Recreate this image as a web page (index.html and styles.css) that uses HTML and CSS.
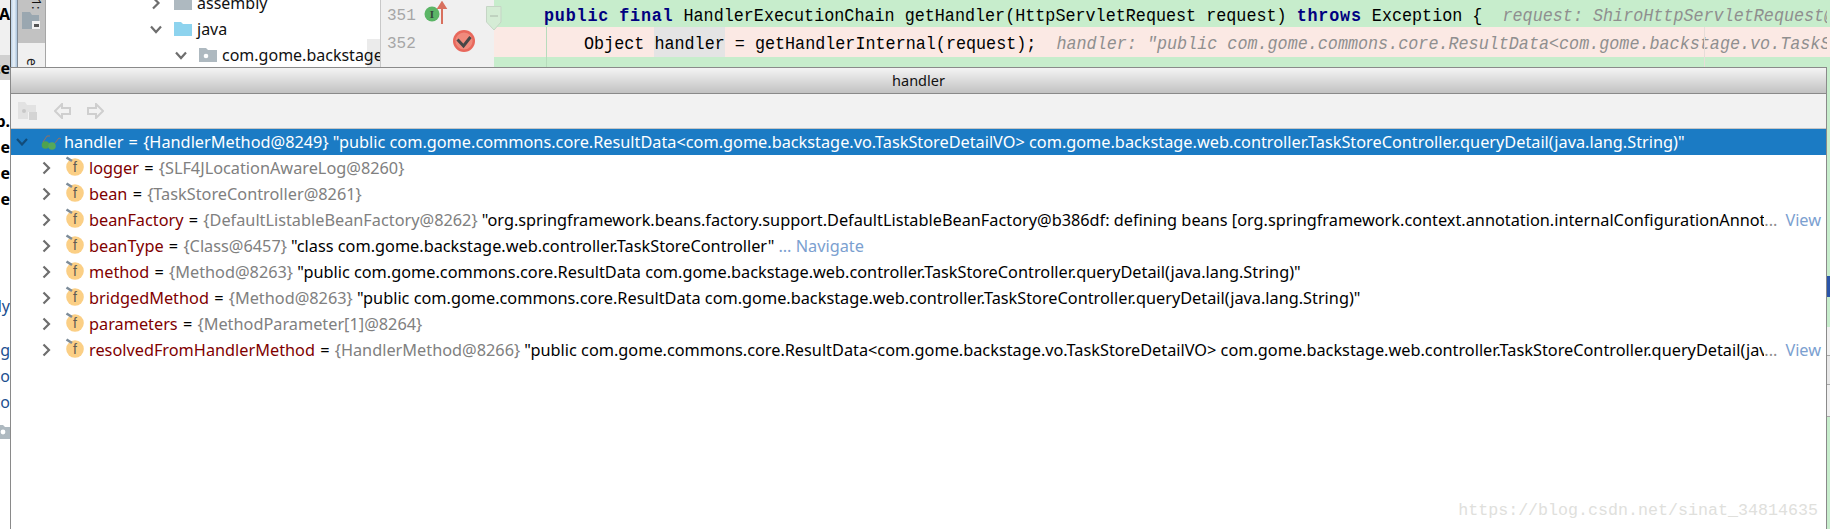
FILE: index.html
```html
<!DOCTYPE html>
<html lang="en">
<head>
<meta charset="utf-8">
<title>handler</title>
<link rel="stylesheet" href="styles.css">
</head>
<body>
<svg class="defs" width="0" height="0" aria-hidden="true">
  <defs>
    <g id="field">
      <circle cx="10" cy="11" r="8.8" fill="#fbcf85"/>
      <text x="10" y="16" text-anchor="middle" font-family="Liberation Sans, sans-serif" font-size="14" fill="#5f5c54">f</text>
      <path d="M1.5 1.5 L7 5" stroke="#7d8c99" stroke-width="2.6" fill="none"/>
    </g>
    <path id="chev" d="M1.5 1.5 L7 7 L1.5 12.5" stroke="#6e6e6e" stroke-width="2.2" fill="none"/>
  </defs>
</svg>
<div class="screen">
  <div class="clip">
    <div class="clip-row h27 grey"><b>TA</b></div>
    <div class="clip-row h28 grey"></div>
    <div class="clip-row h25 mid"><b>ute</b></div>
    <div class="clip-gap g28"></div>
    <div class="clip-row h26"><b>ab.</b></div>
    <div class="clip-row h26"><b>ne</b></div>
    <div class="clip-row h26"><b>ne</b></div>
    <div class="clip-row h26"><b>ne</b></div>
    <div class="clip-gap g81"></div>
    <div class="clip-row h26 link">ly</div>
    <div class="clip-gap g18"></div>
    <div class="clip-row h26 link">m.g</div>
    <div class="clip-row h26 link">co</div>
    <div class="clip-row h26 link">co</div>
    <div class="clip-folder">
      <svg width="10" height="16" viewBox="0 0 10 16"><path d="M-8 2 H3 L5 4 H10 V16 H-8 Z" fill="#aeb9c0"/><circle cx="3" cy="9" r="2.4" fill="#fff"/></svg>
    </div>
  </div>
  <div class="stripe"></div>
  <div class="sidebar">
    <div class="side-tab">
      <span class="side-num">1:</span>
      <svg class="side-icon" width="19" height="18" viewBox="0 0 19 18"><path d="M0 0 H8 L10 3 H17 V10 H10 V17 H0 Z" fill="#9aa7b0"/><rect x="10" y="9" width="8" height="8" fill="#f2f2f2"/><rect x="12" y="12" width="5" height="3" fill="#555"/></svg>
    </div>
    <div class="side-rest"><span class="side-letter">e</span></div>
  </div>
  <div class="tree">
    <div class="tree-scroll"></div>
    <div class="tree-row lvl0">
      <svg class="t-chev" width="9" height="14" viewBox="0 0 9 14"><use href="#chev"/></svg>
      <svg class="t-icon" width="18" height="14" viewBox="0 0 18 14"><path d="M0 0 H7 L9 2 H18 V14 H0 Z" fill="#aeb9c0"/></svg>
      <span>assembly</span>
    </div>
    <div class="tree-row lvl0">
      <svg class="t-chev" width="12" height="9" viewBox="0 0 12 9"><path d="M1 1.5 L6 7 L11 1.5" stroke="#6e6e6e" stroke-width="2.2" fill="none"/></svg>
      <svg class="t-icon" width="18" height="14" viewBox="0 0 18 14"><path d="M0 0 H7 L9 2 H18 V14 H0 Z" fill="#8dd3ee"/></svg>
      <span>java</span>
    </div>
    <div class="tree-row lvl1">
      <svg class="t-chev" width="12" height="9" viewBox="0 0 12 9"><path d="M1 1.5 L6 7 L11 1.5" stroke="#6e6e6e" stroke-width="2.2" fill="none"/></svg>
      <svg class="t-icon" width="18" height="14" viewBox="0 0 18 14"><path d="M0 0 H7 L9 2 H18 V14 H0 Z" fill="#aeb9c0"/><circle cx="7" cy="8" r="2.3" fill="#fff"/></svg>
      <span>com.gome.backstage.web.controller</span>
    </div>
  </div>
  <div class="gutter">
    <div class="gut-row g1">
      <span class="lnum">351</span>
      <svg class="gut-i" width="28" height="24" viewBox="0 0 28 24"><circle cx="8" cy="13" r="7.5" fill="#5bb566"/><text x="8" y="17" text-anchor="middle" font-family="Liberation Serif, serif" font-weight="700" font-size="11" fill="#33473a">I</text><path d="M18 23 V3 M14.5 7 L18 1.5 L21.5 7 Z" stroke="#d8705e" stroke-width="2" fill="#d8705e"/></svg>
    </div>
    <div class="gut-row g2">
      <span class="lnum">352</span>
      <svg class="gut-b" width="24" height="24" viewBox="0 0 24 24"><circle cx="12" cy="12" r="11" fill="#e8685c"/><circle cx="12" cy="12" r="8.6" fill="#f08a7c"/><path d="M5.5 10.5 L11.5 17 L18.5 8" stroke="#474747" stroke-width="3" fill="none"/></svg>
    </div>
    <svg class="fold" width="16" height="25" viewBox="0 0 16 25"><path d="M.5 .5 H15 V16 L8 24 L.5 16 Z" fill="#d5ecd5" stroke="#c5d5c5"/><path d="M4 10 H12" stroke="#aab8aa"/></svg>
  </div>
  <div class="editor">
    <div class="code green l1"><span class="code-in"><b>public</b> <b>final</b> HandlerExecutionChain getHandler(HttpServletRequest request) <b>throws</b> Exception {  <i>request: ShiroHttpServletRequest@8270</i></span></div>
    <div class="code pink l2"><span class="code-in ind">Object <span class="hl">handler</span> = getHandlerInternal(request);  <i>handler: "public com.gome.commons.core.ResultData&lt;com.gome.backstage.vo.TaskStoreDetailVO&gt; com.gome</i></span></div>
    <div class="code green l3"><span class="code-in ind">if (handler == null) {</span></div>
    <div class="guide"></div>
    <div class="margin"></div>
  </div>
  <div class="right">
    <div class="r a"></div><div class="r b"></div><div class="r c"></div><div class="r d"></div><div class="r e"></div><div class="r f"></div><div class="r g"></div><div class="r h"></div><div class="r i"></div><div class="r j"></div>
  </div>
</div>

<section class="popup">
  <header class="title">handler</header>
  <div class="toolbar">
    <svg width="20" height="18" viewBox="0 0 20 18"><path d="M0 0 H7 L9 3 H18 V10 H10 V17 H0 Z" fill="#e2e2e2"/><circle cx="6" cy="9" r="2" fill="#c8c8c8"/><rect x="11" y="10" width="8" height="8" fill="#d4d4d4"/></svg>
    <svg class="nav" width="17" height="16" viewBox="0 0 17 16"><path d="M1 8 L8 1 V5 H16 V11 H8 V15 Z" fill="#f2f2f2" stroke="#cfcfcf" stroke-width="2"/></svg>
    <svg class="nav" width="17" height="16" viewBox="0 0 17 16"><path d="M16 8 L9 1 V5 H1 V11 H9 V15 Z" fill="#f2f2f2" stroke="#cfcfcf" stroke-width="2"/></svg>
  </div>
  <div class="vars">
    <div class="row sel">
      <svg class="down" width="12" height="8" viewBox="0 0 12 8"><path d="M1 1 L6 6.5 L11 1" stroke="#124c7a" stroke-width="2.2" fill="none"/></svg>
      <svg class="watch" width="21" height="17" viewBox="0 0 21 17"><circle cx="4.5" cy="11" r="3.8" fill="#4ea24e"/><circle cx="11" cy="12" r="3.8" fill="#55a85a"/><path d="M2 8 L6 2 L9 2 M14 9 L18 4 L20 5" stroke="#96705e" fill="none"/></svg>
      <span class="val">handler<span class="eq"> = </span>{HandlerMethod@8249} "public com.gome.commons.core.ResultData&lt;com.gome.backstage.vo.TaskStoreDetailVO&gt; com.gome.backstage.web.controller.TaskStoreController.queryDetail(java.lang.String)"</span>
    </div>
    <div class="row"><svg class="chev" width="9" height="14" viewBox="0 0 9 14"><use href="#chev"/></svg><svg class="fld" width="20" height="20" viewBox="0 0 20 20"><use href="#field"/></svg><span class="val"><span class="name">logger</span><span class="eq"> = </span><span class="ref">{SLF4JLocationAwareLog@8260}</span></span></div>
    <div class="row"><svg class="chev" width="9" height="14" viewBox="0 0 9 14"><use href="#chev"/></svg><svg class="fld" width="20" height="20" viewBox="0 0 20 20"><use href="#field"/></svg><span class="val"><span class="name">bean</span><span class="eq"> = </span><span class="ref">{TaskStoreController@8261}</span></span></div>
    <div class="row"><svg class="chev" width="9" height="14" viewBox="0 0 9 14"><use href="#chev"/></svg><svg class="fld" width="20" height="20" viewBox="0 0 20 20"><use href="#field"/></svg><span class="val trunc"><span class="name">beanFactory</span><span class="eq"> = </span><span class="ref">{DefaultListableBeanFactory@8262}</span> "org.springframework.beans.factory.support.DefaultListableBeanFactory@b386df: defining beans [org.springframework.context.annotation.internalConfigurationAnnotationProcessor</span><span class="more">...</span><span class="act">View</span></div>
    <div class="row"><svg class="chev" width="9" height="14" viewBox="0 0 9 14"><use href="#chev"/></svg><svg class="fld" width="20" height="20" viewBox="0 0 20 20"><use href="#field"/></svg><span class="val"><span class="name">beanType</span><span class="eq"> = </span><span class="ref">{Class@6457}</span> "class com.gome.backstage.web.controller.TaskStoreController"</span><span class="more nav-more">... Navigate</span></div>
    <div class="row"><svg class="chev" width="9" height="14" viewBox="0 0 9 14"><use href="#chev"/></svg><svg class="fld" width="20" height="20" viewBox="0 0 20 20"><use href="#field"/></svg><span class="val"><span class="name">method</span><span class="eq"> = </span><span class="ref">{Method@8263}</span> "public com.gome.commons.core.ResultData com.gome.backstage.web.controller.TaskStoreController.queryDetail(java.lang.String)"</span></div>
    <div class="row"><svg class="chev" width="9" height="14" viewBox="0 0 9 14"><use href="#chev"/></svg><svg class="fld" width="20" height="20" viewBox="0 0 20 20"><use href="#field"/></svg><span class="val"><span class="name">bridgedMethod</span><span class="eq"> = </span><span class="ref">{Method@8263}</span> "public com.gome.commons.core.ResultData com.gome.backstage.web.controller.TaskStoreController.queryDetail(java.lang.String)"</span></div>
    <div class="row"><svg class="chev" width="9" height="14" viewBox="0 0 9 14"><use href="#chev"/></svg><svg class="fld" width="20" height="20" viewBox="0 0 20 20"><use href="#field"/></svg><span class="val"><span class="name">parameters</span><span class="eq"> = </span><span class="ref">{MethodParameter[1]@8264}</span></span></div>
    <div class="row"><svg class="chev" width="9" height="14" viewBox="0 0 9 14"><use href="#chev"/></svg><svg class="fld" width="20" height="20" viewBox="0 0 20 20"><use href="#field"/></svg><span class="val trunc"><span class="name">resolvedFromHandlerMethod</span><span class="eq"> = </span><span class="ref">{HandlerMethod@8266}</span> "public com.gome.commons.core.ResultData&lt;com.gome.backstage.vo.TaskStoreDetailVO&gt; com.gome.backstage.web.controller.TaskStoreController.queryDetail(java.lang.String)"</span><span class="more">...</span><span class="act">View</span></div>
  </div>
  <div class="mark">https://blog.csdn.net/sinat_34814635</div>
</section>
</body>
</html>
```
FILE: styles.css
```css
* { box-sizing: border-box; }
html, body { margin: 0; padding: 0; }
body { width: 1830px; height: 529px; overflow: hidden; position: relative; background: #fff; font-family: "Noto Sans", "Open Sans", sans-serif; }
.defs { position: absolute; }
.screen { display: flex; height: 529px; overflow: hidden; }

/* clipped window on the far left */
.clip { width: 10px; flex: none; display: flex; flex-direction: column; overflow: hidden; background: #fff; font-size: 16px; }
.clip-row { display: flex; justify-content: flex-end; align-items: center; white-space: nowrap; overflow: hidden; flex: none; color: #000; }
.clip-row.grey { background: #f0f0f0; }
.clip-row.mid { background: #d0d0d0; }
.clip-row.link { color: #1d4f8f; }
.h25 { height: 25px; } .h26 { height: 26px; } .h27 { height: 27px; } .h28 { height: 28px; }
.g28 { height: 28px; flex: none; } .g81 { height: 81px; flex: none; } .g18 { height: 18px; flex: none; }
.clip-folder { height: 16px; flex: none; margin-top: 8px; }
.clip-folder svg { display: block; }

.stripe { width: 8px; flex: none; border-left: 1px solid #555; background: linear-gradient(90deg, #bcd2e8, #e9f1f8 50%, #aac4de); border-right: 1px solid #7f8a96; }

/* tool window bar */
.sidebar { width: 27px; flex: none; background: #f0f0f0; display: flex; flex-direction: column; }
.side-tab { height: 43px; background: #c2c2c2; position: relative; display: flex; flex-direction: column; align-items: center; }
.side-num { font-size: 13px; transform: rotate(90deg); line-height: 10px; height: 10px; color: #111; margin-top: -1px; margin-left: 12px; }
.side-icon { margin-top: 3px; }
.side-rest { display: flex; justify-content: center; padding-top: 11px; }
.side-letter { font-size: 14px; transform: rotate(90deg); line-height: 16px; color: #222; }

/* project tree */
.tree { width: 335px; flex: none; border-left: 1px solid #a6a6a6; background: #fff; position: relative; overflow: hidden; font-size: 16px; color: #111; margin-top: -10px; height: 539px; }
.tree-row { height: 26px; display: flex; align-items: center; white-space: nowrap; position: relative; }
.lvl0 { padding-left: 104px; }
.lvl1 { padding-left: 129px; }
.t-chev { flex: none; width: 12px; }
.t-icon { flex: none; margin-left: 12px; margin-right: 5px; }
.tree-scroll { position: absolute; right: 0; top: 49px; width: 13px; height: 28px; background: #ebebeb; }

/* gutter */
.gutter { width: 114px; flex: none; background: #f0f0f0; border-left: 1px solid #c8c8c8; position: relative; font-family: "Liberation Mono", monospace; }
.gut-row { display: flex; align-items: center; padding-left: 6px; }
.g1 { height: 27px; }
.g2 { height: 30px; }
.lnum { font-size: 16px; color: #a6a6a6; width: 37px; flex: none; margin-top: 4px; }
.gut-i { margin-top: -1px; }
.gut-b { margin-left: 28px; transform: translateY(-1px); }
.fold { position: absolute; right: -8px; top: 6px; z-index: 2; }

/* editor */
.editor { flex: 1; min-width: 0; position: relative; overflow: hidden; background: #c7edcc; font-family: "Liberation Mono", monospace; font-size: 16.75px; color: #000; }
.code { overflow: hidden; padding-left: 50px; display: flex; align-items: center; white-space: pre; }
.code-in { transform: scaleY(1.12); }
.code-in.ind { padding-left: 40px; }
.code b { color: #000080; font-weight: 700; letter-spacing: .8px; }
.code i { color: #8f8f8f; font-style: italic; }
.l1 { height: 27px; padding-top: 3px; }
.l2 { height: 30px; padding-top: 2px; }
.l3 { height: 30px; padding-top: 4px; }
.green { background: #c7edcc; }
.pink { background: #fbe9e4; }
.hl { background: #e4e4e4; padding: 6px 0; }
.guide { position: absolute; left: 52px; top: 27px; bottom: 0; width: 1px; background: #b7dcbc; }
.margin { position: absolute; left: 1210px; top: 27px; bottom: 0; width: 1px; background: #e6ddd8; }

.right { width: 3px; flex: none; display: flex; flex-direction: column; }
.r { flex: none; }
.a { height: 27px; background: #c7edcc; } .b { height: 30px; background: #fbe9e4; } .c { height: 219px; background: #c7edcc; }
.d { height: 21px; background: #2a55a8; } .e { height: 30px; background: #c7edcc; } .f { height: 29px; background: #f0f0f0; border-bottom: 1px solid #a8a8a8; }
.g { height: 29px; background: #e8e8e8; border-bottom: 1px solid #a8a8a8; } .h { height: 31px; background: #f0f0f0; } .i { height: 1px; background: #a8a8a8; } .j { height: 112px; background: #c7edcc; }

/* evaluate popup */
.popup { position: absolute; left: 10px; top: 67px; width: 1817px; height: 462px; background: #fff; border: 1px solid #8a8a8a; border-bottom: 0; display: flex; flex-direction: column; }
.title { height: 26px; flex: none; background: linear-gradient(#f4f4f4, #c2c2c2); border-bottom: 1px solid #8a8a8a; text-align: center; font-size: 14.5px; line-height: 25px; color: #111; }
.toolbar { height: 35px; flex: none; background: #f2f2f2; border-bottom: 1px solid #c6c6c6; display: flex; align-items: center; gap: 16px; padding-left: 7px; }
.toolbar svg { flex: none; }
.vars { flex: 1; font-size: 16.3px; color: #000; }
.row { height: 26px; display: flex; align-items: center; white-space: nowrap; padding-left: 31px; padding-right: 5px; }
.row.sel { background: #1b7bc4; color: #fff; padding-left: 0; }
.down { margin-left: 5px; flex: none; }
.watch { margin-left: 13px; flex: none; }
.sel .val { margin-left: 2px; }
.chev { flex: none; }
.fld { flex: none; margin-left: 14px; margin-top: -4px; }
.val { margin-left: 4px; }
.trunc { flex: 1; min-width: 0; overflow: hidden; }
.name { color: #7f0000; }
.eq { white-space: pre; word-spacing: 1px; }
.ref { color: #808080; }
.more { color: #8e8e8e; flex: none; }
.act { color: #7ba0d0; flex: none; margin-left: 8px; }
.nav-more { color: #7ba0d0; margin-left: 4px; }
.mark { position: absolute; right: 8px; bottom: 9px; font-family: "Liberation Mono", monospace; font-size: 16.67px; color: #e0e0dc; }
```
